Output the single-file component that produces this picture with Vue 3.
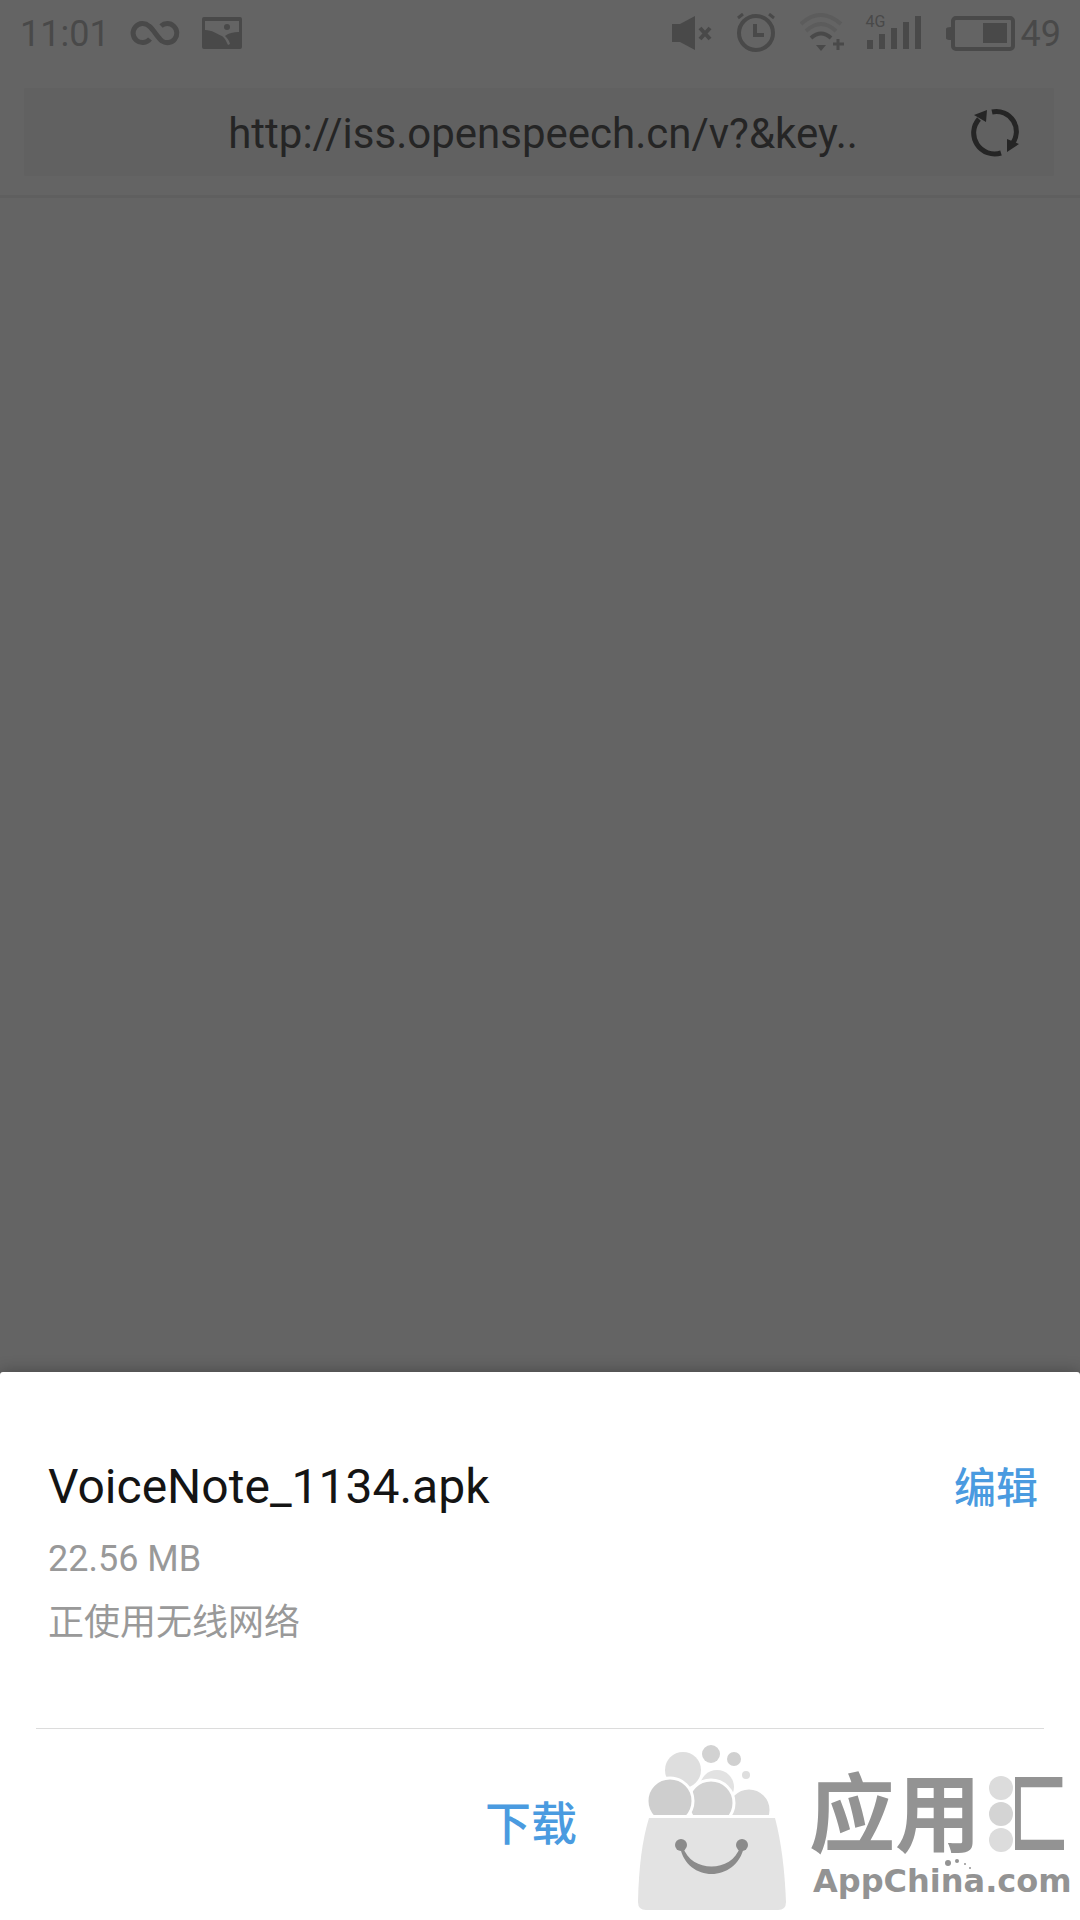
<script setup>
const pageUrl = 'http://iss.openspeech.cn/v?&key..'
const file = { name: 'VoiceNote_1134.apk', size: '22.56 MB', network: '正使用无线网络' }
</script>

<template>
  <div class="screen">
    <div class="status">
      <div class="group">
        <span class="clock">11:01</span>
        <svg class="infinity" width="50" height="26" viewBox="0 0 50 26" aria-hidden="true">
          <path d="M20 19a9.5 9.5 0 1 1-1-13C24 10 27 17 32 21a9.500 9.500 0 1 0-1-15" fill="none" stroke="currentColor" stroke-width="5" />
        </svg>
        <svg width="40" height="32" viewBox="0 0 40 32" aria-hidden="true">
          <path fill="currentColor" fill-rule="evenodd" d="M2 0h36a2 2 0 0 1 2 2v28a2 2 0 0 1-2 2H2a2 2 0 0 1-2-2V2a2 2 0 0 1 2-2ZM3 4v9c7 0 12 4 17 6 3 2 4 5 6 9l2-1c-1-4-3-6-5-8 4-3 8-4 14-4V4Z" />
          <circle cx="25" cy="10" r="3" fill="currentColor" />
        </svg>
      </div>
      <div class="group icons">
        <svg width="40" height="34" viewBox="0 0 40 34" aria-hidden="true">
          <path fill="currentColor" d="M0 8h8L23 0v34L8 26H0Z" />
          <path d="M28 12l10 11M38 12L28 23" stroke="currentColor" stroke-width="4" />
        </svg>
        <svg width="40" height="40" viewBox="0 0 40 40" fill="none" stroke="currentColor" aria-hidden="true">
          <circle cx="20" cy="20" r="17" stroke-width="4" />
          <path d="M19 11v11h9" stroke-width="4" />
          <path d="M2 5l5-4M38 5l-5-4" stroke-width="3" />
        </svg>
        <svg width="46" height="40" viewBox="0 0 46 40" fill="none" stroke="currentColor" aria-hidden="true">
          <g stroke-width="4">
            <path d="M1 11Q20-7 41 11M6 18Q21 4 36 18" opacity=".28" />
            <path d="M11 25Q21 16 31 25" />
          </g>
          <path d="M16 32h10l-5 6Z" fill="currentColor" stroke="none" />
          <path d="M38 26v11M33 31h11" stroke-width="3" />
        </svg>
        <span class="signal">
          <svg width="56" height="36" viewBox="0 0 56 36" aria-hidden="true">
            <path fill="currentColor" d="M1 25h6v9H1ZM13 19h6v15h-6ZM25 13h6v21h-6ZM37 7h6v27h-6ZM49 1h6v33h-6Z" />
          </svg>
          <span class="mobile">4G</span>
        </span>
        <svg width="69" height="36" viewBox="0 0 69 36" aria-hidden="true">
          <rect x="7" y="3" width="60" height="31" rx="3" fill="none" stroke="currentColor" stroke-width="4" />
          <path fill="currentColor" d="M0 14q0-2 5-2v13q-5 0-5-2ZM37 8h24v20H37Z" />
        </svg>
        <span class="clock">49</span>
      </div>
    </div>

    <header class="toolbar">
      <form class="address" @submit.prevent>
        <input type="text" :value="pageUrl" aria-label="网址" readonly />
        <button type="button" class="reload" aria-label="刷新">
          <svg width="50" height="50" viewBox="0 0 50 50" fill="none" stroke="currentColor" stroke-width="5">
            <path d="M22 5A20 20 0 0 1 42 37M31 46A21 21 0 0 1 9 12" />
            <path d="M4 8l13-5-1 12ZM37 32l12 5-12 8Z" fill="currentColor" stroke="none" />
          </svg>
        </button>
      </form>
    </header>

    <main class="page"></main>

    <section class="sheet" role="dialog" aria-labelledby="file-name">
      <div class="details">
        <div class="file">
          <h1 id="file-name">{{ file.name }}</h1>
          <p>{{ file.size }}</p>
          <p>{{ file.network }}</p>
        </div>
        <button type="button" class="edit">编辑</button>
      </div>
      <div class="actions">
        <button type="button" class="download">下载</button>
      </div>

      <div class="watermark">
        <svg width="150" height="168" viewBox="0 0 150 168" aria-hidden="true">
          <g fill="#dedede">
            <circle cx="46" cy="26" r="18" />
            <circle cx="80" cy="43" r="17" fill="#e2e2e2" />
            <circle cx="74" cy="10" r="9" fill="#d2d2d2" />
            <circle cx="97" cy="15" r="7" fill="#d0d0d0" />
            <circle cx="109" cy="31" r="4" />
          </g>
          <g stroke="#fff" stroke-width="3">
            <circle cx="112" cy="66" r="22" fill="#dadada" />
            <circle cx="74" cy="59" r="23" fill="#d2d2d2" />
            <circle cx="33" cy="57" r="23" fill="#cecece" />
          </g>
          <path d="M0 71h150v97H0Z" fill="#fff" />
          <path d="M12 74H138Q147 108 149 158Q149 166 141 166H9Q1 166 1 158Q2 106 12 74Z" fill="#e3e3e3" />
          <g fill="#8b8b8b">
            <circle cx="44" cy="101" r="6" />
            <circle cx="105" cy="101" r="6" />
            <path d="M43 103C50 139 99 139 107 103H103C95 129 54 129 46 103Z" />
          </g>
        </svg>
        <div class="brand">
          <div class="brand-name">应用<span class="hui">汇<i class="dots"><b></b><b></b><b></b></i></span></div>
          <div class="brand-site">AppChina.com
            <svg class="sparks" width="36" height="14" viewBox="0 0 36 14" fill="currentColor" aria-hidden="true">
              <circle cx="11" cy="5" r="3" /><circle cx="20" cy="3" r="2" /><circle cx="28" cy="6" r="1" /><circle cx="33" cy="10" r="1" />
            </svg>
          </div>
        </div>
      </div>
    </section>
  </div>
</template>

<style>
body {
  background: #646464;
}
</style>

<style scoped>
.screen {
  display: flex;
  flex-direction: column;
  min-height: 100vh;
  background: #646464;
  font-family: Roboto, "Noto Sans CJK SC", sans-serif;
}
.status {
  display: flex;
  justify-content: space-between;
  align-items: center;
  height: 66px;
  padding: 0 19px 0 20px;
  color: #494949;
}
.group {
  display: flex;
  align-items: center;
  gap: 24px;
}
.group svg {
  display: block;
}
.clock {
  padding-top: 2px;
  font-size: 36px;
  line-height: 40px;
}
.infinity {
  margin: 0 -2px 0 -4px;
}
.icons .clock {
  margin-left: -18px;
}
.signal {
  position: relative;
  margin-left: -4px;
}
.mobile {
  position: absolute;
  top: 0;
  left: 0;
  font-size: 16px;
  line-height: 14px;
}
.toolbar {
  padding: 22px 26px 19px 24px;
  border-bottom: 3px solid #5f5f5f;
}
.address {
  display: flex;
  align-items: center;
  height: 88px;
  padding: 0 34px 0 92px;
  border-radius: 2px;
  background: #616161;
  color: #252525;
}
.address input {
  flex: 1;
  min-width: 0;
  padding: 4px 0 0;
  border: 0;
  outline: 0;
  background: none;
  color: inherit;
  font: 42px/50px Roboto, sans-serif;
  text-align: center;
}
button {
  padding: 0;
  border: 0;
  background: none;
  color: #4a9be0;
  font-family: inherit;
  font-weight: 500;
  cursor: pointer;
}
.reload {
  color: #252525;
}
.reload svg {
  display: block;
}
.page {
  flex: 1;
}
.sheet {
  position: relative;
  border-radius: 3px 3px 0 0;
  background: #fff;
  box-shadow: 0 0 16px rgba(0, 0, 0, .3);
}
.details {
  display: flex;
  justify-content: space-between;
  align-items: flex-start;
  margin: 0 36px;
  padding: 84px 6px 72px 12px;
  border-bottom: 1px solid #dcdcdc;
}
.file h1 {
  margin: 0 0 10px;
  color: #141414;
  font-size: 48px;
  font-weight: 400;
  line-height: 62px;
}
.file p {
  margin: 0 0 2px;
  color: #999;
  font-size: 36px;
  line-height: 62px;
}
.edit {
  padding-top: 2px;
  font-size: 42px;
  line-height: 62px;
}
.actions {
  padding: 60px 18px 61px 0;
  text-align: center;
}
.download {
  font-size: 46px;
  line-height: 70px;
}
.watermark {
  position: absolute;
  right: 0;
  bottom: 8px;
  display: flex;
  align-items: flex-end;
  gap: 22px;
  padding-right: 9px;
  color: #939393;
}
.brand {
  width: 262px;
  font-weight: 700;
}
.brand-name {
  font-size: 86px;
  line-height: 90px;
  white-space: nowrap;
}
.hui {
  position: relative;
}
.dots {
  position: absolute;
  top: 0;
  left: 0;
  display: flex;
  flex-direction: column;
  gap: 2px;
  padding: 10px 2px 20px 8px;
  background: #fff;
}
.dots b {
  width: 24px;
  height: 24px;
  border-radius: 50%;
  background: #dcdcdc;
}
.dots b:nth-child(2) {
  background: #d4d4d4;
}
.brand-site {
  position: relative;
  padding: 0 0 12px 4px;
  font: 700 32px/38px "DejaVu Sans", sans-serif;
}
.sparks {
  position: absolute;
  top: -4px;
  left: 128px;
}
</style>
